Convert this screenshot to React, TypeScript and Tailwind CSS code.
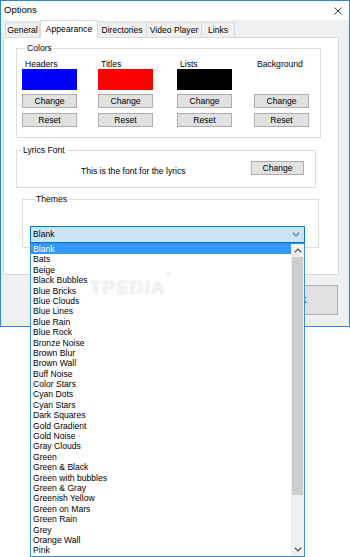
import React from 'react';

const themes = [
  'Blank', 'Bats', 'Beige', 'Black Bubbles', 'Blue Bricks', 'Blue Clouds', 'Blue Lines', 'Blue Rain',
  'Blue Rock', 'Bronze Noise', 'Brown Blur', 'Brown Wall', 'Buff Noise', 'Color Stars', 'Cyan Dots',
  'Cyan Stars', 'Dark Squares', 'Gold Gradient', 'Gold Noise', 'Gray Clouds', 'Green', 'Green & Black',
  'Green with bubbles', 'Green & Gray', 'Greenish Yellow', 'Green on Mars', 'Green Rain', 'Grey',
  'Orange Wall', 'Pink',
];

const tabs = [
  { label: 'General', w: 'w-[35px]' },
  { label: 'Appearance', w: 'w-[58px]', active: true },
  { label: 'Directories', w: 'w-[50px]' },
  { label: 'Video Player', w: 'w-[56px]' },
  { label: 'Links', w: 'w-[34px]' },
];

const Btn = ({ label, className }: { label: string; className?: string }) => (
  <div className={`h-[14px] bg-[#e1e1e1] border border-[#adadad] flex items-center justify-center leading-none ${className ?? ''}`}>
    {label}
  </div>
);

const ColorColumn = ({ label, swatch, className }: { label: string; swatch?: string; className?: string }) => (
  <div className={`w-[55px] flex flex-col ${className ?? ''}`}>
    <div className="h-[10px] leading-[10px] pl-[3px] whitespace-nowrap">{label}</div>
    <div className={`h-[21px] ${swatch ?? ''}`} />
    <Btn label="Change" className="mt-[4px]" />
    <Btn label="Reset" className="mt-[5px]" />
  </div>
);

const Chevron = ({ up, className }: { up?: boolean; className?: string }) => (
  <svg width="8" height="5" viewBox="0 0 8 5" className={className}>
    <path d={up ? 'M0.8 4.3 L4 1.1 L7.2 4.3' : 'M0.8 0.7 L4 3.9 L7.2 0.7'} fill="none" stroke="currentColor" strokeWidth="1.3" />
  </svg>
);

export default function App() {
  return (
    <div className="relative w-[350px] h-[557px] bg-white overflow-hidden text-[8.6px] text-black font-['Liberation_Sans',Arial,sans-serif]">
      {/* Window */}
      <div className="w-[350px] h-[327px] border border-[#2b88d8] bg-[#f0f0f0] flex flex-col">
        {/* Title bar */}
        <div className="h-[19px] bg-white flex items-center justify-between pl-[3px] pr-[7px]">
          <span className="text-[9.5px]">Options</span>
          <svg width="8" height="8" viewBox="0 0 8 8">
            <path d="M0.5 0.5 L7.5 7.5 M7.5 0.5 L0.5 7.5" stroke="#222" strokeWidth="0.9" />
          </svg>
        </div>

        {/* Tab strip */}
        <div className="h-[17px] flex items-end pl-[4px]">
          {tabs.map((t) =>
            t.active ? (
              <div
                key={t.label}
                className={`${t.w} h-[18px] -mb-px bg-white border border-b-0 border-[#d9d9d9] relative z-10 flex items-center justify-center`}
              >
                {t.label}
              </div>
            ) : (
              <div
                key={t.label}
                className={`${t.w} h-[15px] bg-[#f0f0f0] border border-b-0 border-[#d9d9d9] -ml-px first:ml-0 flex items-center justify-center whitespace-nowrap`}
              >
                {t.label}
              </div>
            )
          )}
        </div>

        {/* Tab page */}
        <div className="ml-[2px] w-[336px] h-[238px] bg-white border border-[#d9d9d9] flex flex-col items-start pl-[12px] pt-[5px]">
          <fieldset className="w-[305px] h-[95px] border border-[#dcdcdc] pl-[5px] pt-[6px]">
            <legend className="ml-[4px] px-[1px] leading-[10px]">Colors</legend>
            <div className="flex">
              <ColorColumn label="Headers" swatch="bg-[#0000ff]" />
              <ColorColumn label="Titles" swatch="bg-[#ff0000]" className="ml-[21px]" />
              <ColorColumn label="Lists" swatch="bg-black" className="ml-[24px]" />
              <ColorColumn label="Background" className="ml-[22px]" />
            </div>
          </fieldset>

          <fieldset className="mt-[7px] w-[300px] h-[43px] border border-[#dcdcdc]">
            <legend className="ml-[5px] px-[1px] leading-[10px]">Lyrics Font</legend>
            <div className="flex items-start pt-[6px] pl-[64px]">
              <span className="mt-[5px] leading-[10px]">This is the font for the lyrics</span>
              <Btn label="Change" className="w-[53px] ml-auto mr-[11px]" />
            </div>
          </fieldset>

          <fieldset className="mt-[6px] ml-[6px] w-[297px] h-[54px] border border-[#dcdcdc] pl-[7px] pt-[22px]">
            <legend className="ml-[5px] px-[1px] leading-[10px]">Themes</legend>
            <div className="w-[275px] h-[17px] bg-[#cce4f7] border border-[#0078d7] flex items-center justify-between pl-[2px] pr-[4px]">
              <span>Blank</span>
              <Chevron className="text-[#6a7f96]" />
            </div>
          </fieldset>
        </div>

        {/* Dialog buttons */}
        <div className="flex-1 flex justify-end items-start pt-[10px] pr-[11px]">
          <div className="w-[75px] h-[30px] bg-[#e1e1e1] border border-[#adadad] flex items-center justify-center text-[#1c3a5a]">
            OK
          </div>
        </div>
      </div>

      {/* Open dropdown list */}
      <div className="absolute left-[30px] top-[243px] w-[275px] h-[314px] bg-white border border-[#3b8edb] flex">
        <div className="flex-1 flex flex-col">
          {themes.map((t, i) => (
            <div
              key={t}
              className={`h-[10.4px] leading-[10.4px] pl-[2px] whitespace-nowrap ${i === 0 ? 'bg-[#3399ff] text-white' : ''}`}
            >
              {t}
            </div>
          ))}
        </div>
        <div className="w-[13px] bg-[#f0f0f0] flex flex-col">
          <div className="h-[13px] flex items-center justify-center">
            <Chevron up className="text-[#555]" />
          </div>
          <div className="h-[238px] mx-[1px] bg-[#cdcdcd]" />
          <div className="flex-1" />
          <div className="h-[13px] flex items-center justify-center">
            <Chevron className="text-[#555]" />
          </div>
        </div>
        {/* faint watermark */}
        <div className="absolute left-[59px] top-[34px] text-[19px] font-bold tracking-[1px] leading-none text-white/70 [text-shadow:0_0_1.5px_#d0d0d0] pointer-events-none">
          TPEDIA<sup className="text-[7px] align-top">®</sup>
        </div>
      </div>
    </div>
  );
}
